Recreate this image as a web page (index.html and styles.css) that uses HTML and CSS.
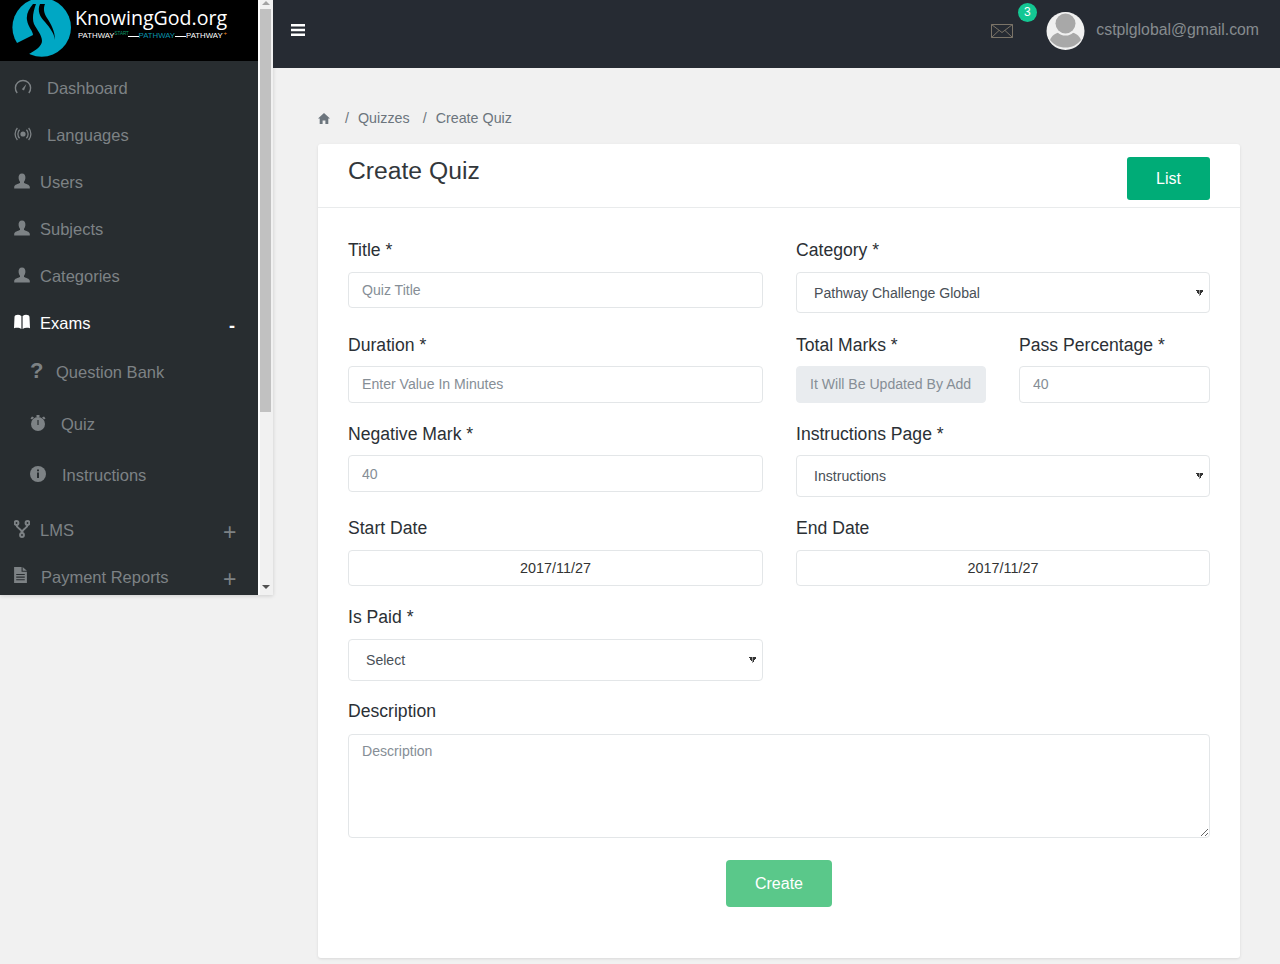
FILE: index.html
```html
<!DOCTYPE html>
<html lang="en">

<head>
    <meta charset="UTF-8">
    <meta name="viewport" content="width=device-width, initial-scale=1.0">
    <title>Create Quiz</title>
    <link rel="stylesheet" href="styles.css">
</head>

<body>

    <div class="side-wrap">
        <aside class="sidebar">
            <div class="logo">
                <svg class="logo-mark" viewBox="12 0 60 60" width="60" height="60">
                    <circle cx="41.7" cy="27.4" r="29.3" fill="#00a7c4"/>
                    <path d="M33 4C29 9 26 14 27 20C28 27 33 31 33 35L17 43L10 60L29 54C36 50 42 46 42 41C42 35 37 30 34 24C32 19 33 12 36 4Z" fill="#000"/>
                    <path d="M40 4C37 11 40 17 45 22C50 28 54 33 55 40C55 31 51 24 47 18C44 13 43 9 45 4Z" fill="#000"/>
                </svg>
                <div class="logo-text">
                    <div class="logo-name">KnowingGod.org</div>
                    <div class="logo-tag">
                        <span>PATHWAY</span><span class="tag-start">START</span><span class="tag-dash"></span><span class="tag-mid">PATHWAY</span><span class="tag-dash"></span><span>PATHWAY</span><span class="tag-plus">+</span>
                    </div>
                </div>
            </div>
            <ul class="nav">
                <li class="nav-link gap-wide">
                    <svg class="nav-icon" viewBox="1 1 16 16"><path d="M3.2 15A7.6 7.6 0 1 1 14.8 15" fill="none" stroke="currentColor" stroke-width="1.4"/><path d="M7.8 11.2L12.4 6L10 12.6Z" fill="currentColor"/></svg>
                    <span>Dashboard</span>
                </li>
                <li class="nav-link gap-wide">
                    <svg class="nav-icon" viewBox="1 1 16 16"><circle cx="9" cy="9" r="2.6" fill="currentColor"/><path d="M5.6 4.8A6 6 0 0 0 5.6 13.2M12.4 4.8A6 6 0 0 1 12.4 13.2M3.4 3A9 9 0 0 0 3.4 15M14.6 3A9 9 0 0 1 14.6 15" fill="none" stroke="currentColor" stroke-width="1.3"/></svg>
                    <span>Languages</span>
                </li>
                <li class="nav-link">
                    <svg class="nav-icon" viewBox="1 0.5 16 16"><path d="M9 1C6.6 1 5.4 3 5.6 5.5C5.7 7 6.2 8.4 7 9.2V10.6C5 11.6 1.5 12 1.2 14.5V16H16.8V14.5C16.5 12 13 11.6 11 10.6V9.2C11.8 8.4 12.3 7 12.4 5.5C12.6 3 11.4 1 9 1Z" fill="currentColor"/></svg>
                    <span>Users</span>
                </li>
                <li class="nav-link">
                    <svg class="nav-icon" viewBox="1 0.5 16 16"><path d="M9 1C6.6 1 5.4 3 5.6 5.5C5.7 7 6.2 8.4 7 9.2V10.6C5 11.6 1.5 12 1.2 14.5V16H16.8V14.5C16.5 12 13 11.6 11 10.6V9.2C11.8 8.4 12.3 7 12.4 5.5C12.6 3 11.4 1 9 1Z" fill="currentColor"/></svg>
                    <span>Subjects</span>
                </li>
                <li class="nav-link">
                    <svg class="nav-icon" viewBox="1 0.5 16 16"><path d="M9 1C6.6 1 5.4 3 5.6 5.5C5.7 7 6.2 8.4 7 9.2V10.6C5 11.6 1.5 12 1.2 14.5V16H16.8V14.5C16.5 12 13 11.6 11 10.6V9.2C11.8 8.4 12.3 7 12.4 5.5C12.6 3 11.4 1 9 1Z" fill="currentColor"/></svg>
                    <span>Categories</span>
                </li>
                <li class="nav-link active">
                    <svg class="nav-icon" viewBox="1 1 16 16"><path d="M1.5 4C1.5 2 5.5 .8 8.4 3V16C6.5 14.6 4 14.4 1 15.2Z M16.5 4C16.5 2 12.5 .8 9.6 3V16C11.5 14.6 14 14.4 17 15.2Z" fill="currentColor"/></svg>
                    <span>Exams</span>
                    <span class="toggle minus">-</span>
                </li>
                <li class="nav-link sub">
                    <span class="nav-icon qmark">?</span>
                    <span>Question Bank</span>
                </li>
                <li class="nav-link sub sub-quiz">
                    <svg class="nav-icon" viewBox="1 1 16 16"><circle cx="9" cy="10" r="7" fill="currentColor"/><path d="M3 2.5L1.5 4.5L3 5.5L5 3.5ZM15 2.5L16.5 4.5L15 5.5L13 3.5ZM7.5 1H10.5V3H7.5Z" fill="currentColor"/><path d="M8.4 6H9.6V11H8.4Z" fill="#282d30"/></svg>
                    <span>Quiz</span>
                </li>
                <li class="nav-link sub sub-info">
                    <svg class="nav-icon" viewBox="1 1 16 16"><circle cx="9" cy="9" r="8" fill="currentColor"/><path d="M8 4.5H10V6.3H8ZM8 7.6H10V13H8Z" fill="#282d30"/></svg>
                    <span>Instructions</span>
                </li>
                <li class="nav-link lms">
                    <svg class="nav-icon" viewBox="1 0 16 18"><g fill="none" stroke="currentColor" stroke-width="2"><circle cx="3.5" cy="3" r="1.9"/><circle cx="14.5" cy="3" r="1.9"/><circle cx="9" cy="15" r="1.9"/><path d="M3.5 5C3.5 9 9 8 9 13M14.5 5C14.5 9 9 8 9 13"/></g></svg>
                    <span>LMS</span>
                    <span class="toggle">+</span>
                </li>
                <li class="nav-link pay">
                    <svg class="nav-icon" viewBox="2 1 12 15"><path d="M2 1H9V5.5H14V16H2ZM10 1L14 4.5H10Z" fill="currentColor"/><path d="M4 8H12M4 10.5H12M4 13H12" stroke="#282d30" stroke-width="1"/></svg>
                    <span>Payment Reports</span>
                    <span class="toggle">+</span>
                </li>
            </ul>
        </aside>
        <div class="scroll-strip">
            <div class="arrow-up"></div>
            <div class="scroll-thumb"></div>
            <div class="arrow-down"></div>
        </div>
    </div>

    <div class="main">
        <header class="topbar">
            <svg class="bars" viewBox="0 0 14 12" width="14" height="12"><path d="M0 0H14V2.6H0ZM0 4.7H14V7.3H0ZM0 9.4H14V12H0Z" fill="#fff"/></svg>
            <div class="top-right">
                <div class="mail">
                    <svg viewBox="0 0 22 14" width="22" height="14"><path d="M.5.5H21.5V13.5H.5ZM.5.5L11 8.5L21.5.5M.5 13.5L8 6.5M21.5 13.5L14 6.5" fill="none" stroke="#7b7468" stroke-width="1"/></svg>
                    <span class="badge">3</span>
                </div>
                <svg class="avatar" viewBox="0 0 39 38" width="39" height="38"><circle cx="19.5" cy="19" r="19" fill="#f0f0f0"/><path d="M4 28C6 23 10 21 14 20H25C29 21 33 23 35 28C31 33 26 35.5 19.5 35.5C13 35.5 8 33 4 28Z" fill="#a8a8a8"/><circle cx="19.5" cy="12" r="11.5" fill="#f0f0f0"/><circle cx="19.5" cy="11.5" r="10" fill="#a8a8a8"/></svg>
                <span class="user-mail">cstplglobal@gmail.com</span>
            </div>
        </header>

        <div class="content">
            <div class="breadcrumb">
                <svg class="home" viewBox="0 0 12 11" width="12" height="11"><path d="M6 0L12 5.6H10.3V11H7.4V7.4H4.6V11H1.7V5.6H0Z" fill="#6c757d"/></svg>
                <span class="crumb-sep">/</span><span>Quizzes</span>
                <span class="crumb-sep">/</span><span>Create Quiz</span>
            </div>

            <div class="card">
                <div class="card-head">
                    <h2>Create Quiz</h2>
                    <button type="button" class="btn-list">List</button>
                </div>
                <form class="card-body">
                    <div class="row">
                        <div class="field">
                            <label>Title *</label>
                            <input type="text" placeholder="Quiz Title">
                        </div>
                        <div class="field">
                            <label>Category *</label>
                            <select class="select-first">
                                <option>Pathway Challenge Global</option>
                            </select>
                        </div>
                    </div>
                    <div class="row">
                        <div class="field">
                            <label>Duration *</label>
                            <input type="text" placeholder="Enter Value In Minutes">
                        </div>
                        <div class="field split">
                            <div class="field">
                                <label>Total Marks *</label>
                                <input type="text" placeholder="It Will Be Updated By Add" disabled>
                            </div>
                            <div class="field">
                                <label>Pass Percentage *</label>
                                <input type="text" placeholder="40">
                            </div>
                        </div>
                    </div>
                    <div class="row">
                        <div class="field">
                            <label>Negative Mark *</label>
                            <input type="text" placeholder="40">
                        </div>
                        <div class="field">
                            <label>Instructions Page *</label>
                            <select>
                                <option>Instructions</option>
                            </select>
                        </div>
                    </div>
                    <div class="row">
                        <div class="field">
                            <label>Start Date</label>
                            <input type="text" class="date" value="2017/11/27">
                        </div>
                        <div class="field">
                            <label>End Date</label>
                            <input type="text" class="date" value="2017/11/27">
                        </div>
                    </div>
                    <div class="row row-last">
                        <div class="field">
                            <label>Is Paid *</label>
                            <select>
                                <option>Select</option>
                            </select>
                        </div>
                    </div>
                    <div class="field">
                        <label>Description</label>
                        <textarea placeholder="Description"></textarea>
                    </div>
                    <div class="actions">
                        <button type="submit" class="btn-create">Create</button>
                    </div>
                </form>
            </div>
        </div>
    </div>

</body>

</html>
```

FILE: styles.css
```css
* {
    box-sizing: border-box;
}

html,
body {
    height: 964px;
    overflow: hidden;
}

body {
    margin: 0;
    display: flex;
    align-items: flex-start;
    background-color: #f1f1f1;
    font-family: "Liberation Sans", Arial, sans-serif;
    color: #2b3035;
}

/* Sidebar */
.side-wrap {
    display: flex;
    width: 273px;
    height: 595px;
    flex: none;
    box-shadow: 0 1px 4px rgba(0, 0, 0, 0.15);
}

.sidebar {
    width: 258px;
    background-color: #282d30;
    overflow: hidden;
}

.logo {
    display: flex;
    height: 61px;
    padding-left: 12px;
    background-color: #000;
    overflow: hidden;
}

.logo-mark {
    flex: none;
}

.logo-text {
    margin-left: 3px;
    padding-top: 4px;
    color: #fff;
}

.logo-name {
    font-family: "Open Sans", sans-serif;
    font-size: 19.6px;
    line-height: 27px;
    white-space: nowrap;
}

.logo-tag {
    display: flex;
    align-items: center;
    height: 10px;
    margin-left: 3px;
    font-size: 7.8px;
    line-height: 10px;
    white-space: nowrap;
}

.tag-start {
    width: 13px;
    margin-top: -5px;
    color: #0e9c6b;
    font-size: 4.5px;
    line-height: 5px;
}

.tag-plus {
    margin-top: -5px;
    margin-left: 1px;
    color: #f08a24;
    font-size: 6px;
    line-height: 5px;
}

.tag-dash {
    width: 11px;
    height: 1px;
    background-color: #fff;
}

.tag-mid {
    color: #0a93ad;
}

.nav {
    list-style: none;
    margin: 0;
    padding: 4px 0 0;
}

.nav-link {
    display: flex;
    align-items: center;
    height: 47px;
    padding-left: 14px;
    color: #7d8285;
    font-size: 16.5px;
}

.nav-icon {
    width: 16px;
    height: 16px;
    flex: none;
    margin-top: -4px;
    margin-right: 10px;
}

.gap-wide .nav-icon {
    width: 18px;
    margin-right: 15px;
}

.active {
    color: #fff;
}

.sub {
    padding-left: 30px;
    height: 51px;
}

.sub .nav-icon {
    margin-right: 15px;
}

.sub-quiz {
    margin-top: 1px;
}

.sub-quiz .nav-icon {
    margin-top: -3px;
}

.sub .qmark {
    width: 11px;
    margin-right: 15px;
    font-size: 22px;
    font-weight: bold;
    line-height: 16px;
}

.sub-info .nav-icon {
    margin-right: 16px;
}

.lms {
    margin-top: 6px;
}

.lms .nav-icon {
    height: 18px;
}

.pay .nav-icon {
    width: 13px;
    margin-top: -6px;
    margin-right: 14px;
}

.toggle {
    margin-left: auto;
    padding-top: 3px;
    width: 35px;
    font-size: 23px;
    font-weight: normal;
    line-height: 1;
    text-align: left;
}

.minus {
    width: 29px;
    font-size: 18px;
    font-weight: bold;
    padding-top: 4px;
}

.scroll-strip {
    display: flex;
    flex-direction: column;
    width: 15px;
    background-color: #f1f1f1;
    border-left: 2px solid #fff;
}

.scroll-thumb {
    width: 11px;
    height: 403px;
    margin-top: 4px;
    background-color: #c1c1c1;
}

.arrow-up {
    width: 0;
    height: 0;
    margin: 1px 0 0 1.5px;
    border-left: 4px solid transparent;
    border-right: 4px solid transparent;
    border-bottom: 4px solid #a3a3a3;
}

.arrow-down {
    width: 0;
    height: 0;
    margin: auto 0 6px 1.5px;
    border-left: 4px solid transparent;
    border-right: 4px solid transparent;
    border-top: 4px solid #505050;
}

/* Header */
.main {
    flex: 1;
    min-width: 0;
}

.topbar {
    display: flex;
    align-items: center;
    justify-content: space-between;
    height: 68px;
    padding: 0 21px 8px 18px;
    background-color: #262b33;
}

.top-right {
    display: flex;
    align-items: center;
}

.mail {
    position: relative;
    display: flex;
    margin-right: 33px;
    margin-top: 2px;
}

.badge {
    position: absolute;
    top: -21.5px;
    left: 26.5px;
    width: 19px;
    height: 19px;
    border-radius: 50%;
    background-color: #14c793;
    color: #fff;
    font-size: 12px;
    line-height: 19px;
    text-align: center;
}

.avatar {
    margin-top: 2px;
}

.user-mail {
    margin-left: 11px;
    color: #868b8f;
    font-size: 15.8px;
}

/* Content */
.content {
    padding: 41px 40px 0 45px;
}

.breadcrumb {
    display: flex;
    align-items: center;
    height: 18px;
    margin-bottom: 17px;
    color: #6c757d;
    font-size: 14.3px;
}

.home {
    margin-right: 15px;
}

.crumb-sep {
    margin-right: 9px;
}

.breadcrumb span:nth-of-type(3) {
    margin-left: 13px;
}

.card {
    height: 814px;
    background-color: #fff;
    border-radius: 3px;
    box-shadow: 0 1px 3px rgba(0, 0, 0, 0.1);
}

.card-head {
    display: flex;
    justify-content: space-between;
    height: 64px;
    padding: 13px 30px 0;
    border-bottom: 1px solid #e9ebec;
}

.card-head h2 {
    margin: 0;
    font-size: 24.7px;
    font-weight: normal;
    line-height: 28px;
    color: #32373b;
}

.btn-list {
    width: 83px;
    height: 43px;
    border: none;
    border-radius: 3px;
    background-color: #00ac77;
    color: #fff;
    font-family: inherit;
    font-size: 16px;
}

.card-body {
    padding: 29px 30px 0;
}

.row {
    display: grid;
    grid-template-columns: 415px 414px;
    column-gap: 33px;
    margin-bottom: 18.1px;
}

.row-last {
    margin-bottom: 17.6px;
}

.field {
    display: flex;
    flex-direction: column;
    min-width: 0;
}

.split {
    display: grid;
    grid-template-columns: 190px 191px;
    column-gap: 33px;
}

label {
    height: 26px;
    margin-bottom: 8.6px;
    font-size: 17.6px;
    line-height: 26px;
}

input,
select,
textarea {
    width: 100%;
    border: 1px solid #e3e6e8;
    border-radius: 4px;
    background-color: #fff;
    color: #495057;
    font-family: inherit;
    font-size: 14.08px;
    outline: none;
}

input {
    height: 36.6px;
    padding: 0 13px;
}

input::placeholder,
textarea::placeholder {
    color: #868e96;
    opacity: 1;
}

input:disabled {
    background-color: #e9ecef;
    border-color: #e9ecef;
}

.date {
    color: #333;
    font-size: 14.4px;
    text-align: center;
}

select {
    height: 41.6px;
    padding: 0 17px;
    appearance: none;
    background-image: linear-gradient(to top right, transparent 50%, #333 50%), linear-gradient(to top left, transparent 50%, #333 50%);
    background-size: 3.5px 6px;
    background-repeat: no-repeat;
    background-position: right 9.5px center, right 6px center;
}

.select-first {
    height: 41.9px;
}

textarea {
    display: block;
    height: 104px;
    margin-top: 1px;
    padding: 8px 13px;
}

.actions {
    display: flex;
    justify-content: center;
    margin-top: 22px;
}

.btn-create {
    width: 106px;
    height: 47.5px;
    border: none;
    border-radius: 4px;
    background-color: #5ac88a;
    color: #fff;
    font-family: inherit;
    font-size: 16px;
}
```
